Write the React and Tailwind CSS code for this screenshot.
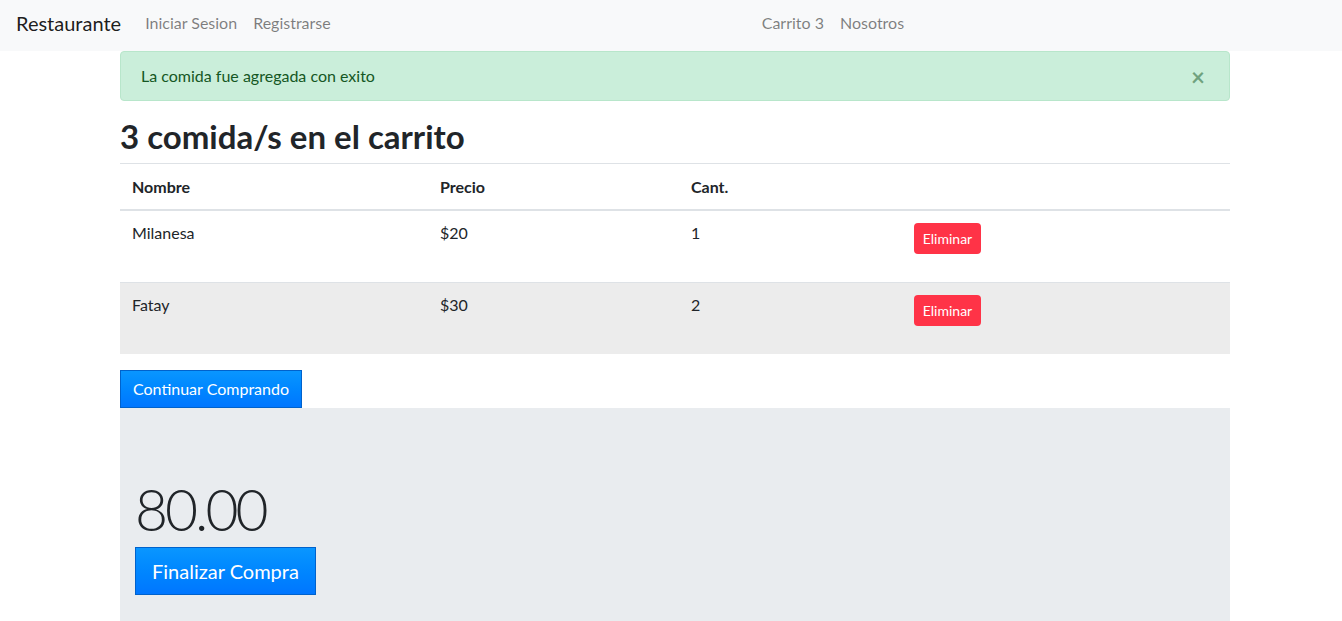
const items = [
  { name: 'Milanesa', price: '$20', qty: 1 },
  { name: 'Fatay', price: '$30', qty: 2 },
];

function NavLink({ children }) {
  return <a className="px-2 text-[16px] leading-6 text-black/50">{children}</a>;
}

export default function App() {
  return (
    <div className="min-h-screen bg-white text-[#212529] font-['Lato','Noto_Sans',sans-serif]">
      {/* navbar */}
      <nav className="h-[51px] bg-[#f8f9fa] flex items-center px-4 pb-[5px]">
        <span className="text-[20px] leading-[30px] text-black/90 mr-4">Restaurante</span>
        <NavLink>Iniciar Sesion</NavLink>
        <NavLink>Registrarse</NavLink>
        <div className="ml-[415px] flex">
          <NavLink>Carrito 3</NavLink>
          <NavLink>Nosotros</NavLink>
        </div>
      </nav>

      <div className="w-[1110px] ml-[120px]">
        {/* alert */}
        <div className="h-[50px] flex items-center justify-between px-5 rounded border border-[#b8e6cb] bg-[#caeeda] text-[#155724] mb-4">
          <span className="text-[16px]">La comida fue agregada con exito</span>
          <span className="text-[24px] font-bold leading-none text-[#155724]/50 mr-[4px] mt-[2px]">×</span>
        </div>

        <h1 className="text-[33px] leading-[38px] font-bold mb-2 pt-[1px] -mt-[1px]">3 comida/s en el carrito</h1>

        {/* cart table */}
        <table className="w-full text-[16px] mb-4 border-collapse">
          <thead>
            <tr className="border-t border-b-2 border-[#dee2e6]">
              <th className="text-left font-bold px-3 pt-[11px] pb-[10px] w-[308px]">Nombre</th>
              <th className="text-left font-bold px-3 pt-[11px] pb-[10px] w-[251px]">Precio</th>
              <th className="text-left font-bold px-3 pt-[11px] pb-[10px] w-[223px]">Cant.</th>
              <th className="px-3 pt-[11px] pb-[10px]"></th>
            </tr>
          </thead>
          <tbody>
            {items.map((it, i) => (
              <tr key={it.name} className={`border-t border-[#dee2e6] ${i % 2 ? 'bg-[#ececec]' : ''}`}>
                <td className="px-3 pt-[10px] pb-[14px] align-top leading-6">{it.name}</td>
                <td className="px-3 pt-[10px] pb-[14px] align-top leading-6">{it.price}</td>
                <td className="px-3 pt-[10px] pb-[14px] align-top leading-6">{it.qty}</td>
                <td className="p-3 align-top">
                  <form className="mb-4">
                    <button
                      type="button"
                      className="h-[31px] w-[67px] rounded bg-[#ff3347] text-white text-[14px] leading-none"
                    >
                      Eliminar
                    </button>
                  </form>
                </td>
              </tr>
            ))}
          </tbody>
        </table>

        <button className="h-[38px] px-3 text-[16px] text-white border border-[#0062cc] bg-gradient-to-b from-[#0a96ff] to-[#0076ff]">
          Continuar Comprando
        </button>

        {/* jumbotron */}
        <div className="bg-[#e9ecef] pt-[68px] pb-16 px-[15px]">
          <div className="text-[57px] leading-[67px] font-light tracking-[-3px]">80.00</div>
          <button className="mt-[4px] h-[48px] px-4 text-[20px] text-white border border-[#0062cc] bg-gradient-to-b from-[#0a96ff] to-[#0076ff]">
            Finalizar Compra
          </button>
        </div>
      </div>
    </div>
  );
}
